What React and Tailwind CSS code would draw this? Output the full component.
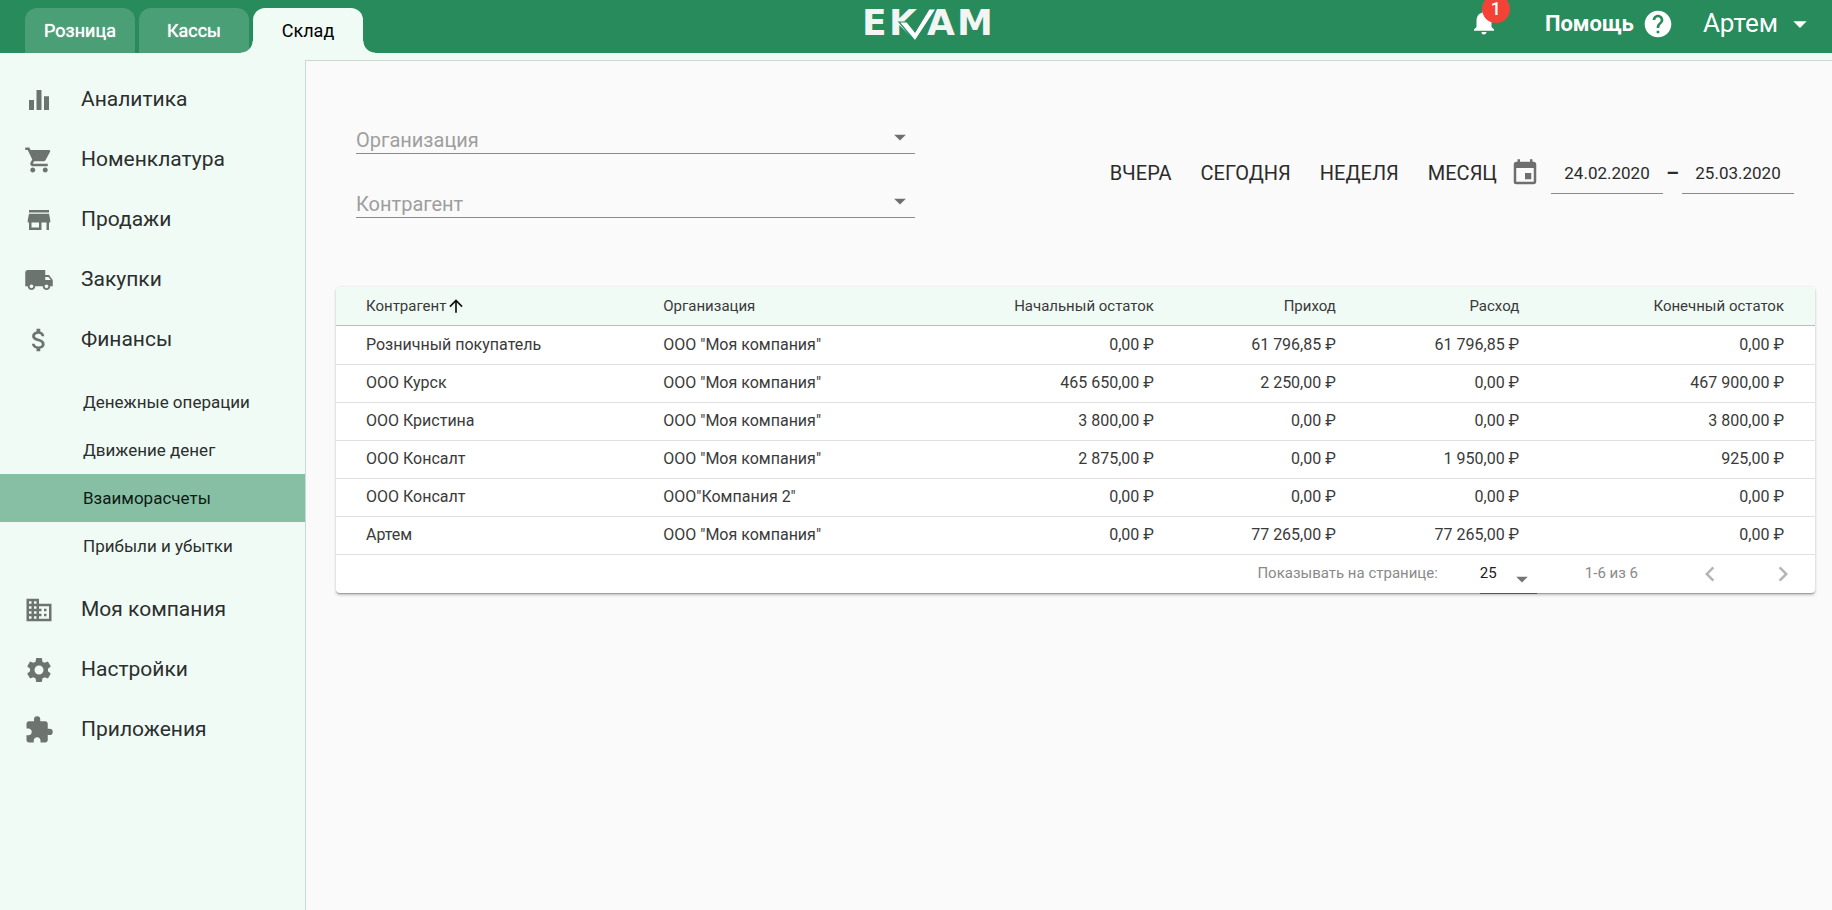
import React from "react";
import {
  MdEqualizer,
  MdShoppingCart,
  MdStore,
  MdLocalShipping,
  MdAttachMoney,
  MdDomain,
  MdSettings,
  MdExtension,
  MdNotifications,
  MdHelp,
  MdEvent,
  MdArrowUpward,
  MdArrowDropDown,
  MdChevronLeft,
  MdChevronRight,
} from "react-icons/md";

const NAV_TOP = [
  { label: "Аналитика", Icon: MdEqualizer },
  { label: "Номенклатура", Icon: MdShoppingCart },
  { label: "Продажи", Icon: MdStore },
  { label: "Закупки", Icon: MdLocalShipping },
  { label: "Финансы", Icon: MdAttachMoney },
];

const NAV_FINANCE = [
  { label: "Денежные операции" },
  { label: "Движение денег" },
  { label: "Взаиморасчеты", active: true },
  { label: "Прибыли и убытки" },
];

const NAV_BOTTOM = [
  { label: "Моя компания", Icon: MdDomain },
  { label: "Настройки", Icon: MdSettings },
  { label: "Приложения", Icon: MdExtension },
];

const ROWS = [
  ["Розничный покупатель", 'ООО "Моя компания"', "0,00 ₽", "61 796,85 ₽", "61 796,85 ₽", "0,00 ₽"],
  ["ООО Курск", 'ООО "Моя компания"', "465 650,00 ₽", "2 250,00 ₽", "0,00 ₽", "467 900,00 ₽"],
  ["ООО Кристина", 'ООО "Моя компания"', "3 800,00 ₽", "0,00 ₽", "0,00 ₽", "3 800,00 ₽"],
  ["ООО Консалт", 'ООО "Моя компания"', "2 875,00 ₽", "0,00 ₽", "1 950,00 ₽", "925,00 ₽"],
  ["ООО Консалт", 'ООО"Компания 2"', "0,00 ₽", "0,00 ₽", "0,00 ₽", "0,00 ₽"],
  ["Артем", 'ООО "Моя компания"', "0,00 ₽", "77 265,00 ₽", "77 265,00 ₽", "0,00 ₽"],
];

function Logo() {
  return (
    <svg width="132" height="48" viewBox="0 0 132 48" role="img" aria-label="EKAM">
      <text
        x="0 27 65 95"
        y="35"
        fontFamily="DejaVu Sans"
        fontWeight="bold"
        fontSize="36"
        fill="#f1f5f3"
      >
        EKAM
      </text>
      <path
        d="M37 22 H45 L53 32 L67 9 H74 L53 41 Z"
        fill="#ffffff"
        stroke="#278b5b"
        strokeWidth="1.2"
      />
    </svg>
  );
}

function Header() {
  return (
    <header className="grid h-[53px] grid-cols-[1fr_auto_1fr] bg-[#278b5b] text-white">
      <nav className="flex items-end gap-1 pl-[25px] text-[18px]">
        <a
          href="#retail"
          className="flex h-[45px] w-[110px] items-center justify-center rounded-t-xl bg-[#4b9f77] [text-shadow:0_0_1px_#fff]"
        >
          Розница
        </a>
        <a
          href="#cash"
          className="flex h-[45px] w-[110px] items-center justify-center rounded-t-xl bg-[#4b9f77] [text-shadow:0_0_1px_#fff]"
        >
          Кассы
        </a>
        <a
          href="#stock"
          aria-current="page"
          className="relative flex h-[45px] w-[110px] items-center justify-center rounded-t-xl bg-[#f1fbf6] text-black"
        >
          <span className="absolute right-full bottom-0 size-3 bg-[radial-gradient(circle_at_top_left,transparent_11px,#f1fbf6_12px)]" />
          Склад
          <span className="absolute bottom-0 left-full size-3 bg-[radial-gradient(circle_at_top_right,transparent_11px,#f1fbf6_12px)]" />
        </a>
      </nav>
      <div className="pl-6">
        <Logo />
      </div>
      <div className="flex h-[47px] items-center justify-end pr-[16px]">
        <button type="button" aria-label="Уведомления" className="relative mr-[46px] mb-1">
          <MdNotifications size={30} />
          <span className="absolute -top-3 left-[13px] flex size-7 items-center justify-center rounded-full bg-[#f44336] text-[18px] font-medium">
            1
          </span>
        </button>
        <a href="#help" className="flex items-center gap-2 text-[22px] font-bold">
          Помощь
          <MdHelp size={32} />
        </a>
        <button type="button" className="ml-[29px] flex items-center gap-[6px] text-[26px]">
          Артем
          <MdArrowDropDown size={32} />
        </button>
      </div>
    </header>
  );
}

function NavItem({ label, Icon }) {
  return (
    <a href="#section" className="flex h-[60px] items-center gap-[27px] pl-6 text-[21px] text-[#2b2f2d]">
      <Icon size={30} className="text-[#6d746f]" />
      {label}
    </a>
  );
}

function Sidebar() {
  return (
    <nav className="w-[305px] shrink-0 pt-[17px]">
      {NAV_TOP.map((item) => (
        <NavItem key={item.label} {...item} />
      ))}
      <div className="pt-2 pb-[10px] text-[17px] text-[#2b2f2d]">
        {NAV_FINANCE.map(({ label, active }) => (
          <a
            key={label}
            href="#finance"
            aria-current={active ? "page" : undefined}
            className={
              active
                ? "flex h-12 items-center bg-[#87bfa4] pt-0.5 pl-[83px] text-[#0e1a14]"
                : "flex h-12 items-center pt-0.5 pl-[83px]"
            }
          >
            {label}
          </a>
        ))}
      </div>
      {NAV_BOTTOM.map((item) => (
        <NavItem key={item.label} {...item} />
      ))}
    </nav>
  );
}

function FilterSelect({ label }) {
  return (
    <div className="relative">
      <select
        aria-label={label}
        defaultValue=""
        className="block h-9 w-full appearance-none border-b border-[#8c8c8c] bg-transparent pt-[7px] text-[20px] text-[#9e9e9e] outline-none"
      >
        <option value="">{label}</option>
      </select>
      <MdArrowDropDown size={28} className="pointer-events-none absolute top-[5px] right-px text-[#6e6e6e]" />
    </div>
  );
}

function Filters() {
  return (
    <div className="flex items-center justify-between pr-[21px] pl-5">
      <div className="flex w-[38.9%] flex-col gap-7">
        <FilterSelect label="Организация" />
        <FilterSelect label="Контрагент" />
      </div>
      <div className="mt-[10px] flex items-center text-[#2b2b2b]">
        <div className="flex gap-[29px] text-[20px]">
          <button type="button">ВЧЕРА</button>
          <button type="button">СЕГОДНЯ</button>
          <button type="button">НЕДЕЛЯ</button>
          <button type="button">МЕСЯЦ</button>
        </div>
        <MdEvent size={30} className="mr-[11px] ml-[13px] text-[#6e6e6e]" />
        <input
          aria-label="Дата начала"
          defaultValue="24.02.2020"
          className="h-[42px] w-28 border-b border-[#8c8c8c] bg-transparent text-center text-[17px] outline-none"
        />
        <span className="w-[19px] text-center text-[20px] font-bold">–</span>
        <input
          aria-label="Дата окончания"
          defaultValue="25.03.2020"
          className="h-[42px] w-28 border-b border-[#8c8c8c] bg-transparent text-center text-[17px] outline-none"
        />
      </div>
    </div>
  );
}

function Settlements() {
  return (
    <section className="mt-[69px] rounded-sm border-b border-[#a0a0a0] bg-white shadow-[0_1px_3px_rgba(0,0,0,0.25)]">
      <table className="w-full table-fixed border-collapse text-[#3a3a3a]">
        <colgroup>
          <col className="w-[20.1%]" />
          <col className="w-[17.3%]" />
          <col className="w-[20%]" />
          <col className="w-[12.3%]" />
          <col className="w-[12.4%]" />
          <col className="w-[17.9%]" />
        </colgroup>
        <thead>
          <tr className="h-[38px] border-b border-[#b0c4bc] bg-[#f1fbf6] text-[15px]">
            <th className="pl-[30px] text-left font-normal">
              <button type="button" className="flex items-center">
                Контрагент
                <MdArrowUpward size={20} className="text-[#111111]" />
              </button>
            </th>
            <th className="pl-[30px] text-left font-normal">Организация</th>
            <th className="pr-[31px] text-right font-normal">Начальный остаток</th>
            <th className="pr-[31px] text-right font-normal">Приход</th>
            <th className="pr-[31px] text-right font-normal">Расход</th>
            <th className="pr-[31px] text-right font-normal">Конечный остаток</th>
          </tr>
        </thead>
        <tbody>
          {ROWS.map((row, i) => (
            <tr key={i} className="h-[38px] border-b border-[#e0e0e0] text-[16px] first:h-[39px]">
              {row.map((cell, j) => (
                <td key={j} className={j < 2 ? "pl-[30px] text-left" : "pr-[31px] text-right"}>
                  {cell}
                </td>
              ))}
            </tr>
          ))}
        </tbody>
      </table>
      <div className="flex h-[38px] items-center justify-end pr-[17px] text-[15px] text-[#8a8a8a]">
        <label htmlFor="page-size">Показывать на странице:</label>
        <div className="relative ml-[42px] h-full w-[57px]">
          <select
            id="page-size"
            className="h-[39px] w-full appearance-none border-b border-[#555555] bg-transparent text-[15px] text-[#212121] outline-none"
          >
            <option>25</option>
          </select>
          <MdArrowDropDown size={28} className="pointer-events-none absolute top-[10px] right-px text-[#757575]" />
        </div>
        <span className="ml-12">1-6 из 6</span>
        <button type="button" aria-label="Назад" className="ml-[57px] text-[#b5b5b5]">
          <MdChevronLeft size={30} />
        </button>
        <button type="button" aria-label="Вперёд" className="ml-[43px] text-[#b5b5b5]">
          <MdChevronRight size={30} />
        </button>
      </div>
    </section>
  );
}

export default function App() {
  return (
    <div className="flex min-h-screen flex-col bg-[#f1fbf6] font-['Roboto',sans-serif]">
      <Header />
      <div className="flex flex-1">
        <Sidebar />
        <main className="mt-[7px] min-w-0 flex-1 border-t border-l border-[#cbd9d4] bg-[#fafafa] pt-[57px] pr-[17px] pl-[30px]">
          <Filters />
          <Settlements />
        </main>
      </div>
    </div>
  );
}
